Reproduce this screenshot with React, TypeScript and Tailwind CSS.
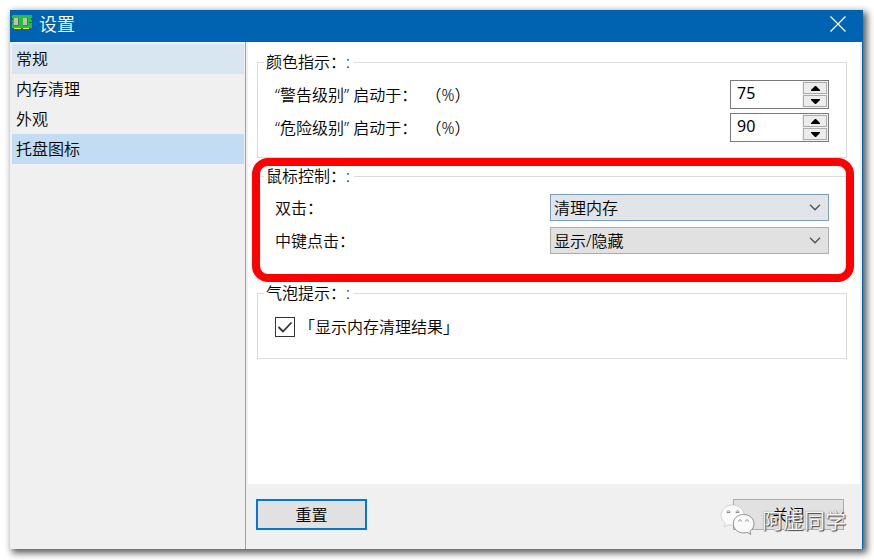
import { useState } from "react";
import type { ReactNode } from "react";

const pages = ["常规", "内存清理", "外观", "托盘图标"];
const clickActions = ["清理内存", "显示/隐藏"];

function MemoryIcon() {
  return (
    <svg width="20" height="18" viewBox="0 0 20 18" shapeRendering="crispEdges" aria-hidden="true">
      <path d="M0 0h20v3h-1v2h1v2h-1v1h1v5H0V8h1V7H0V5h1V3H0z" fill="#22c03c" />
      <path d="M0 3h1v2H0zM0 7h1v1H0zM19 3h1v2h-1zM19 7h1v1h-1zM17 7h2v1h-2z" fill="#14703c" />
      <path d="M2 3h5v8H2zM11 3h5v8h-5z" fill="#4b7a50" />
      <path d="M2 3h4v7H2zM11 3h4v7h-4z" fill="#c4bdb8" />
      <path d="M2 13h7v1H2zM11 13h6v1h-6z" fill="#f4ee20" />
    </svg>
  );
}

function WeChatIcon() {
  return (
    <svg width="36" height="32" viewBox="0 0 36 32" aria-hidden="true">
      <g fill="#fafafa" strokeLinejoin="round">
        <path
          d="M12.5 1C6 1 1 5.500 1 11.300c0 3.300 1.700 6.200 4.400 8.100L4.200 23l4.300-2.200c1.300.3 2.600.5 4 .5C19 21.300 24 16.800 24 11.200S19 1 12.500 1z"
          stroke="#bdbdbd"
          strokeWidth="0.600"
        />
        <path
          d="M23.500 10.500c-5.800 0-10.200 4-10.200 9.200s4.400 9.200 10.200 9.200c1.200 0 2.400-.2 3.500-.5l3.800 2-.9-3.200c2.600-1.700 4.100-4.400 4.100-7.500 0-5.200-4.700-9.200-10.500-9.200z"
          stroke="#777"
          strokeWidth="0.800"
        />
      </g>
      <g fill="none" stroke="#8c8c8c" strokeWidth="1">
        <path d="M7 8.500c0-2.400 3-2.400 3 0zM16 8.500c0-2.400 3-2.400 3 0z" />
        <path d="M18.500 17.500c0-2.200 2.800-2.200 2.800 0M25.700 17.500c0-2.200 2.800-2.200 2.800 0" />
      </g>
    </svg>
  );
}

function Group({ title, className, children }: { title: string; className: string; children: ReactNode }) {
  return (
    <fieldset className={`min-w-0 border border-[#dcdcdc] px-[17px] ${className}`}>
      <legend className="-ml-[11px] pr-1 pl-[2px] leading-5">{title}</legend>
      {children}
    </fieldset>
  );
}

function Spinner({ id, label, initial }: { id: string; label: string; initial: number }) {
  const [value, setValue] = useState(initial);

  return (
    <div className="flex h-[29px] items-center justify-between">
      <label htmlFor={id} className="whitespace-pre">
        {label}
      </label>
      <div className="flex h-full w-[99px] border border-[#7a7a7a] bg-white">
        <input
          id={id}
          type="text"
          inputMode="numeric"
          value={value}
          onChange={(e) => setValue(Number(e.target.value) || 0)}
          className="min-w-0 flex-1 pb-1 pl-[6px] font-normal outline-none"
        />
        <div className="flex w-[26px] flex-col gap-px bg-[#f0f0f0] p-px">
          <button
            type="button"
            aria-label="+"
            onClick={() => setValue(value + 1)}
            className="flex flex-1 items-center justify-center border border-[#acacac] bg-[#ececec]"
          >
            <svg width="9" height="5" viewBox="0 0 9 5">
              <path d="M4 0h1l4 4v1H0V4z" />
            </svg>
          </button>
          <button
            type="button"
            aria-label="-"
            onClick={() => setValue(value - 1)}
            className="flex flex-1 items-center justify-center border border-[#acacac] bg-[#ececec]"
          >
            <svg width="9" height="5" viewBox="0 0 9 5">
              <path d="M0 0h9v1L5 5H4L0 1z" />
            </svg>
          </button>
        </div>
      </div>
    </div>
  );
}

function ActionSelect({ id, label, initial, className }: { id: string; label: string; initial: string; className: string }) {
  return (
    <div className="flex h-[29px] items-center justify-between">
      <label htmlFor={id}>{label}</label>
      <div className="relative w-[279px]">
        <select
          id={id}
          defaultValue={initial}
          className={`block h-[27px] w-full appearance-none border pl-[3px] outline-none ${className}`}
        >
          {clickActions.map((action) => (
            <option key={action}>{action}</option>
          ))}
        </select>
        <svg
          width="12"
          height="7"
          viewBox="0 0 12 7"
          className="pointer-events-none absolute top-[10px] right-2"
          fill="none"
          stroke="#505050"
          strokeWidth="1.300"
        >
          <path d="M1 0.800l5 5 5-5" />
        </svg>
      </div>
    </div>
  );
}

export default function App() {
  const [page, setPage] = useState("托盘图标");

  return (
    <div className="flex min-h-screen bg-white pt-[10px] pr-[11px] pb-[11px] pl-[10px] font-['Noto_Sans','Noto_Sans_CJK_SC',sans-serif] text-base leading-5 font-[350] text-black [text-spacing-trim:space-all]">
      <div className="relative flex flex-1 flex-col border-r border-[#0063b1] bg-[#f0f0f0] shadow-[3px_3px_7px_1px_rgba(0,0,0,0.65)]">
        <header className="flex h-8 items-center bg-[#0063b1] pr-4 pb-1 pl-[2px] text-white">
          <MemoryIcon />
          <h1 className="ml-[7px] text-lg leading-6 font-[350]">设置</h1>
          <button type="button" aria-label="关闭" className="ml-auto">
            <svg width="16" height="16" viewBox="0 0 16 16" fill="none" stroke="white" strokeWidth="1.300">
              <path d="M0.500 0.500l15 15M15.500 0.500l-15 15" />
            </svg>
          </button>
        </header>

        <div className="flex flex-1">
          <nav className="flex w-[236px] flex-col border-r border-[#a0a0a0] pt-[2px] pr-px pl-[2px]">
            {pages.map((name) => {
              const color = name === page ? "bg-[#c2dcf3]" : name === "常规" ? "bg-[#d8e6f1]" : "";
              return (
                <button
                  key={name}
                  type="button"
                  onClick={() => setPage(name)}
                  className={`h-[30px] pl-1 text-left ${color}`}
                >
                  {name}
                </button>
              );
            })}
          </nav>

          <div className="flex min-w-0 flex-1 flex-col pr-[2px] pl-[2px]">
            <main className="flex flex-1 flex-col gap-2 bg-white pt-[10px] pr-[13px] pl-[9px]">
              <Group title="颜色指示：:" className="pt-2 pb-[15px]">
                <div className="flex flex-col gap-1">
                  <Spinner id="warning" label="“警告级别” 启动于：  （%）" initial={75} />
                  <Spinner id="danger" label="“危险级别” 启动于：  （%）" initial={90} />
                </div>
              </Group>

              <div className="relative">
                <Group title="鼠标控制：:" className="pt-[7px] pb-[19px]">
                  <div className="flex flex-col gap-1">
                    <ActionSelect
                      id="double-click"
                      label="双击："
                      initial="清理内存"
                      className="border-[#7a9ebf] bg-[#e1e5e9]"
                    />
                    <ActionSelect
                      id="middle-click"
                      label="中键点击："
                      initial="显示/隐藏"
                      className="border-[#adadad] bg-[#e1e1e1]"
                    />
                  </div>
                </Group>
                <div className="pointer-events-none absolute -top-2 -right-[7px] -bottom-[7px] -left-[5px] rounded-2xl border-8 border-[#fe0000]" />
              </div>

              <Group title="气泡提示：:" className="pt-2 pb-[15px]">
                <label className="flex h-8 items-center">
                  <span className="relative flex">
                    <input
                      type="checkbox"
                      defaultChecked
                      className="peer size-5 appearance-none border border-[#333] bg-white"
                    />
                    <svg
                      viewBox="0 0 20 20"
                      className="pointer-events-none absolute inset-0 hidden size-5 peer-checked:block"
                      fill="none"
                      stroke="#333"
                      strokeWidth="1.800"
                    >
                      <path d="M3.500 10l4.500 4.500L16.500 5.500" />
                    </svg>
                  </span>
                  <span className="ml-1">「显示内存清理结果」</span>
                </label>
              </Group>
            </main>

            <footer className="flex h-[65px] items-start justify-between pt-[15px] pr-4 pl-2">
              <button type="button" className="h-[31px] w-[111px] border-2 border-[#0078d7] bg-[#e1e1e1]">
                重置
              </button>
              <button type="button" className="h-[31px] w-[111px] border border-[#adadad] bg-[#e1e1e1]">
                关闭
              </button>
            </footer>
          </div>
        </div>

        <div className="pointer-events-none absolute right-4 bottom-[13px] flex items-center gap-[6px]">
          <WeChatIcon />
          <span className="text-[21px] leading-6 font-normal text-[#f4f4f4] [text-shadow:1px_1px_1px_#444,0_0_1px_#777]">
            阿虚同学
          </span>
        </div>
      </div>
    </div>
  );
}
